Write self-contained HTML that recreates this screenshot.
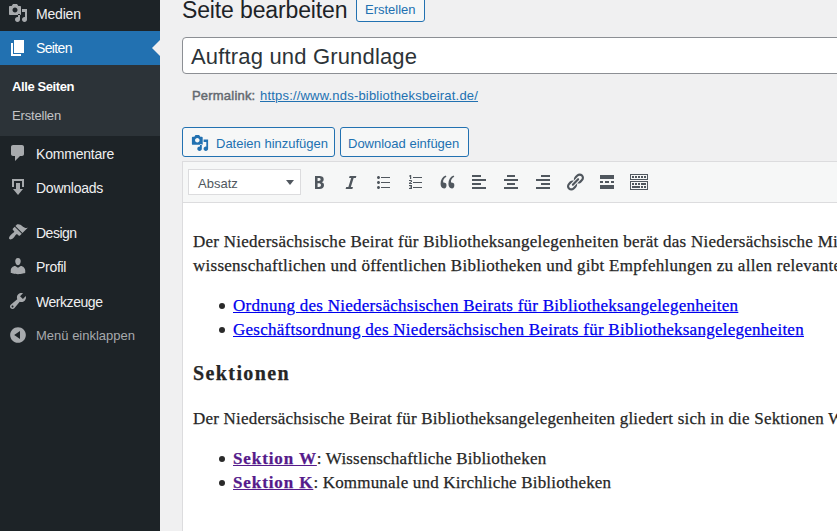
<!DOCTYPE html>
<html><head><meta charset="utf-8">
<style>
*{box-sizing:border-box;margin:0;padding:0}
html,body{width:837px;height:531px;overflow:hidden;background:#f0f0f1;font-family:"Liberation Sans",sans-serif;position:relative}
.a{position:absolute;white-space:nowrap}
#side{position:absolute;left:0;top:0;width:160px;height:531px;background:#1d2327}
.mi{position:absolute;left:0;width:160px;height:34px}
.mt{position:absolute;left:36px;font-size:14px;line-height:18px;color:#f0f0f1}
.ic{position:absolute;left:8px;width:20px;height:20px}
.ic path{fill:#a7aaad}
#sub{position:absolute;left:0;top:65px;width:160px;height:71px;background:#2c3338}
.st{position:absolute;left:12px;font-size:13px;line-height:18px;color:#c3c4c7}
.btn{position:absolute;border:1px solid #2271b1;border-radius:3px;background:#f6f7f7;color:#2271b1;font-size:13px}
.tb{position:absolute;top:172px;width:20px;height:20px}
.tb path,.tb rect,.tb circle{fill:#50575e}
#content{position:absolute;left:182px;top:203px;width:700px;height:400px;background:#fff;border-left:1px solid #dcdcde}
.c{position:absolute;font-family:"Liberation Serif",serif;font-size:17px;line-height:24px;color:#262626;white-space:nowrap;letter-spacing:.26px;-webkit-text-stroke:.25px currentColor}
.bul{position:absolute;width:6px;height:6px;border-radius:50%;background:#2a2a2a}
.lk{color:#0000ee;text-decoration:underline}
.vl{color:#551a8b;text-decoration:underline;font-weight:bold;font-size:17px;letter-spacing:.9px}
</style></head><body>
<div id="side">
  <!-- Medien -->
  <div class="mi" style="top:-3px">
    <svg class="ic" style="top:6px" viewBox="0 0 20 20"><path d="M13 11V4c0-.55-.45-1-1-1h-1.67L9 1H5L3.67 3H2c-.55 0-1 .45-1 1v7c0 .55.45 1 1 1h10c.55 0 1-.45 1-1zM7 4.5c1.38 0 2.5 1.12 2.5 2.5S8.38 9.5 7 9.5 4.5 8.38 4.5 7 5.62 4.5 7 4.5zM14 6h5v10.5c0 1.38-1.120 2.5-2.5 2.5S14 17.88 14 16.5s1.12-2.5 2.5-2.5c.17 0 .34.02.5.05V9h-3V6zM10 13.05V11h2v5.5c0 1.38-1.12 2.5-2.5 2.5S7 17.88 7 16.5s1.12-2.5 2.5-2.5c.17 0 .34.02.5.05z"/></svg>
  </div>
  <div class="mt a" style="top:5px;letter-spacing:-0.2px">Medien</div>
  <!-- Seiten active -->
  <div class="mi" style="top:31px;background:#2271b1"></div>
  <svg class="ic" style="top:38px" viewBox="0 0 20 20"><path style="fill:#fff" d="M6 15V2h10v13H6zm-1 1h8v2H3V5h2v11z"/></svg>
  <div class="mt a" style="top:39px;color:#fff;letter-spacing:-0.65px">Seiten</div>
  <div class="a" style="left:152px;top:40px;width:0;height:0;border-top:8px solid transparent;border-bottom:8px solid transparent;border-right:8px solid #f0f0f1"></div>
  <div id="sub"></div>
  <div class="st a" style="top:78px;color:#fff;font-weight:bold;letter-spacing:-0.4px">Alle Seiten</div>
  <div class="st a" style="top:107px;letter-spacing:-0.18px">Erstellen</div>
  <!-- Kommentare -->
  <svg class="ic" style="top:143px" viewBox="0 0 20 20"><path d="M5 2h9c1.1 0 2 .9 2 2v7c0 1.1-.9 2-2 2h-2l-5 5v-5H5c-1.1 0-2-.9-2-2V4c0-1.1.9-2 2-2z"/></svg>
  <div class="mt a" style="top:145px;letter-spacing:-0.2px">Kommentare</div>
  <!-- Downloads -->
  <svg class="ic" style="top:177px" viewBox="0 0 20 20"><path d="M14.01 4v6h2V2H4v8h2.01V4h8zm-2 2v6h3l-5 6-5-6h3V6h4z"/></svg>
  <div class="mt a" style="top:179px;letter-spacing:-0.25px">Downloads</div>
  <!-- Design -->
  <svg class="ic" style="top:222px" viewBox="0 0 20 20"><path d="M14.48 11.06L7.41 3.99l1.5-1.5c.5-.56 2.3-.47 3.51.32 1.21.8 1.43 1.28 2.91 2.1 1.18.64 2.45 1.26 4.45.85zm-.71.71L6.7 4.7 4.93 6.470c-.39.39-.39 1.02 0 1.41l1.06 1.06c.39.39.39 1.03 0 1.42-.6.6-1.43 1.11-2.21 1.690-.35.26-.7.53-1.01.84C1.43 14.23.4 16.08 1.4 17.07c.99 1 2.84-.03 4.18-1.36.31-.31.58-.66.85-1.02.57-.78 1.08-1.61 1.69-2.21.39-.39 1.02-.39 1.41 0l1.06 1.06c.39.39 1.02.39 1.41 0z"/></svg>
  <div class="mt a" style="top:224px;letter-spacing:-0.5px">Design</div>
  <!-- Profil -->
  <svg class="ic" style="top:256px" viewBox="0 0 20 20"><path d="M10 9.25c-2.27 0-2.73-3.44-2.73-3.44C7 4.02 7.82 2 9.97 2c2.16 0 2.98 2.02 2.710 3.81 0 0-.41 3.44-2.68 3.44zm0 2.57L12.72 10c2.39 0 4.52 2.33 4.52 4.53v2.49s-3.65 1.13-7.24 1.13c-3.65 0-7.24-1.13-7.24-1.13v-2.49c0-2.25 1.94-4.48 4.47-4.48z"/></svg>
  <div class="mt a" style="top:258px;letter-spacing:-0.3px">Profil</div>
  <!-- Werkzeuge -->
  <svg class="ic" style="top:291px" viewBox="0 0 20 20"><path d="M16.68 9.77c-1.34 1.34-3.3 1.67-4.95.99l-5.41 6.52c-.99.99-2.59.99-3.58 0s-.99-2.59 0-3.57l6.52-5.42c-.68-1.65-.35-3.61.99-4.95 1.28-1.28 3.12-1.62 4.72-1.06l-2.89 2.89 2.82 2.82 2.86-2.870c.53 1.58.18 3.39-1.080 4.650zM3.81 16.21c.4.39 1.04.39 1.43 0 .4-.4.4-1.04 0-1.43-.39-.4-1.03-.4-1.430 0-.39.39-.39 1.03 0 1.43z"/></svg>
  <div class="mt a" style="top:293px;letter-spacing:-0.45px">Werkzeuge</div>
  <!-- Collapse -->
  <svg class="ic" style="top:325px" viewBox="0 0 20 20"><path d="M10 2.16c4.33 0 7.84 3.51 7.84 7.84s-3.51 7.84-7.84 7.84S2.16 14.33 2.16 10 5.71 2.16 10 2.16zm2 11.72V6.12L6.18 9.97z"/></svg>
  <div class="a" style="left:36px;top:327px;font-size:13px;line-height:18px;color:#a7aaad">Menü einklappen</div>
</div>

<!-- Main -->
<div class="a" style="left:182px;top:-1px;font-size:23px;line-height:23px;color:#1d2327;letter-spacing:-0.13px">Seite bearbeiten</div>
<div class="btn" style="left:356px;top:-8px;width:69px;height:30px"></div>
<div class="a" style="left:365px;top:3px;font-size:13px;line-height:13px;color:#2271b1">Erstellen</div>

<div class="a" style="left:182px;top:37px;width:700px;height:37px;background:#fff;border:1px solid #8c8f94;border-radius:4px"></div>
<div class="a" style="left:191px;top:46px;font-size:22px;line-height:22px;color:#2c3338;letter-spacing:0.17px">Auftrag und Grundlage</div>

<div class="a" style="left:192px;top:89px;font-size:13px;line-height:13px;color:#646970;-webkit-text-stroke:.45px #646970;letter-spacing:.2px">Permalink:</div>
<div class="a" style="left:260px;top:89px;font-size:13px;line-height:13px;color:#2271b1;text-decoration:underline;letter-spacing:0.19px">https://www.nds-bibliotheksbeirat.de/</div>

<div class="btn" style="left:182px;top:127px;width:153px;height:30px"></div>
<svg class="a" style="left:191px;top:134px;width:18px;height:18px" viewBox="0 0 20 20"><path style="fill:#2271b1" d="M13 11V4c0-.55-.45-1-1-1h-1.67L9 1H5L3.67 3H2c-.55 0-1 .45-1 1v7c0 .55.45 1 1 1h10c.55 0 1-.45 1-1zM7 4.5c1.38 0 2.5 1.12 2.5 2.5S8.38 9.5 7 9.5 4.5 8.38 4.5 7 5.62 4.5 7 4.5zM14 6h5v10.5c0 1.38-1.120 2.5-2.5 2.5S14 17.88 14 16.5s1.12-2.5 2.5-2.5c.17 0 .34.02.5.05V9h-3V6zM10 13.05V11h2v5.5c0 1.38-1.12 2.5-2.5 2.5S7 17.88 7 16.5s1.12-2.5 2.5-2.5c.17 0 .34.02.5.05z"/></svg>
<div class="a" style="left:216px;top:137px;font-size:13px;line-height:13px;color:#2271b1">Dateien hinzufügen</div>
<div class="btn" style="left:340px;top:127px;width:129px;height:30px"></div>
<div class="a" style="left:348px;top:137px;font-size:13px;line-height:13px;color:#2271b1">Download einfügen</div>

<!-- toolbar -->
<div class="a" style="left:182px;top:161px;width:700px;height:42px;background:#f6f7f7;border:1px solid #dcdcde"></div>
<div class="a" style="left:188px;top:169px;width:113px;height:26px;background:#fff;border:1px solid #dcdcde"></div>
<div class="a" style="left:198px;top:177px;font-size:13px;line-height:13px;color:#50575e">Absatz</div>
<div class="a" style="left:286px;top:180px;width:0;height:0;border-left:4px solid transparent;border-right:4px solid transparent;border-top:5px solid #50575e"></div>

<!-- toolbar icons -->
<svg class="tb" style="left:309px" viewBox="0 0 20 20"><path d="M6 4v13h4.54c1.37 0 2.46-.33 3.26-1 .8-.66 1.2-1.58 1.2-2.77 0-.84-.17-1.51-.51-2.01s-.9-.85-1.67-1.03v-.09c.57-.1 1.02-.4 1.36-.9s.51-1.130.51-1.91c0-1.14-.39-1.98-1.17-2.5C12.75 4.26 11.5 4 9.78 4H6zm2.57 5.15V6.02h.75c.81 0 1.39.11 1.75.33.35.22.53.58.53 1.08 0 .54-.19.92-.55 1.14-.36.23-.93.34-1.72.34h-.76zm0 2.12h.89c1.67 0 2.5.59 2.5 1.79 0 .63-.18 1.1-.54 1.39-.36.3-.92.45-1.68.45h-1.17v-3.63z"/></svg>
<svg class="tb" style="left:341px" viewBox="0 0 20 20"><path d="M14.78 6h-2.13l-2.8 9h2.12l-.62 2H4.6l.62-2h2.14l2.8-9H8.03l.62-2h6.75z"/></svg>
<svg class="tb" style="left:373px" viewBox="0 0 20 20"><path d="M5.5 7C4.67 7 4 6.33 4 5.5 4 4.68 4.67 4 5.5 4 6.32 4 7 4.68 7 5.5 7 6.33 6.32 7 5.5 7zM8 5h9v1H8V5zm-2.5 7c-.83 0-1.5-.67-1.5-1.5C4 9.68 4.67 9 5.5 9c.82 0 1.5.68 1.5 1.5 0 .83-.68 1.5-1.5 1.5zM8 10h9v1H8v-1zm-2.5 7c-.83 0-1.5-.67-1.5-1.5 0-.82.67-1.5 1.5-1.5.82 0 1.5.68 1.5 1.5 0 .83-.68 1.5-1.5 1.5zM8 15h9v1H8v-1z"/></svg>
<svg class="tb" style="left:405px" viewBox="0 0 20 20"><path d="M5 3h1.2v4H5z M4 3.6h1v1H4z M8 5h9v1H8z M4 8h2.6v1H4z M6 8.5h1v1.5H6z M5 9.8h1v1H5z M4 10.6h1v1H4z M4 11h3v1H4z M8 10h9v1H8z M4 13h3v1H4z M6 13h1v4H6z M4.8 14.6h1.6v.9H4.8z M4 16h3v1H4z M8 15h9v1H8z"/></svg>
<svg class="tb" style="left:437px" viewBox="0 0 20 20"><path d="M9.49 13.22c0-.74-.2-1.38-.61-1.9-.62-.78-1.83-.94-2.7-.94-.42-1.960.88-4.68 3.28-5.68L8.62 3.5c-3.32 1.28-5.04 4.62-5.04 8.28 0 2.46.99 4.72 3.5 4.72 1.68 0 2.41-1.38 2.41-3.28zm7.84 0c0-.74-.2-1.38-.61-1.9-.63-.78-1.84-.94-2.71-.94-.42-1.96.89-4.68 3.28-5.68L16.46 3.5c-3.32 1.28-5.04 4.62-5.04 8.28 0 2.46.99 4.72 3.5 4.72 1.68 0 2.41-1.38 2.41-3.28z"/></svg>
<svg class="tb" style="left:469px" viewBox="0 0 20 20"><path d="M12 5V3H3v2h9zm5 4V7H3v2h14zm-5 4v-2H3v2h9zm5 4v-2H3v2h14z"/></svg>
<svg class="tb" style="left:501px" viewBox="0 0 20 20"><path d="M14 5V3H6v2h8zm3 4V7H3v2h14zm-3 4v-2H6v2h8zm3 4v-2H3v2h14z"/></svg>
<svg class="tb" style="left:533px" viewBox="0 0 20 20"><path d="M17 5V3H8v2h9zm0 4V7H3v2h14zm0 4v-2H8v2h9zm0 4v-2H3v2h14z"/></svg>
<svg class="tb" style="left:565px" viewBox="0 0 20 20"><path d="M17.74 2.76c1.68 1.69 1.68 4.41 0 6.1l-1.53 1.52c-1.12 1.12-2.7 1.47-4.14 1.09l2.62-2.61.76-.77.76-.76c.84-.84.84-2.2 0-3.04-.84-.85-2.2-.85-3.04 0l-.77.76-3.38 3.38c-.37-1.44-.02-3.02 1.1-4.14l1.52-1.53c1.69-1.68 4.42-1.68 6.1 0zM8.59 13.43l5.34-5.34c.42-.42.42-1.1 0-1.52-.44-.43-1.13-.39-1.53 0l-5.33 5.34c-.42.42-.42 1.1 0 1.52.44.43 1.13.39 1.52 0zm-.76 2.29l4.14-4.15c.38 1.44.03 3.02-1.09 4.14l-1.52 1.53c-1.69 1.68-4.41 1.68-6.1 0-1.68-1.68-1.68-4.42 0-6.1l1.53-1.52c1.12-1.12 2.7-1.47 4.14-1.1l-4.14 4.15c-.85.84-.85 2.2 0 3.05.84.84 2.2.84 3.04 0z"/></svg>
<svg class="tb" style="left:597px" viewBox="0 0 20 20"><path d="M17 7V3H3v4h14zM6 11V9H3v2h3zm6 0V9H8v2h4zm5 0V9h-3v2h3zm0 6v-4H3v4h14z"/></svg>
<svg class="tb" style="left:629px" viewBox="0 0 20 20"><path d="M19 2v6H1V2h18zm-1 5V3H2v4h16zM5 4v2H3V4h2zm3 0v2H6V4h2zm3 0v2H9V4h2zm3 0v2h-2V4h2zm3 0v2h-2V4h2zm2 5v9H1V9h18zm-1 8v-7H2v7h16zM5 11v2H3v-2h2zm3 0v2H6v-2h2zm3 0v2H9v-2h2zm6 0v2h-5v-2h5zm-6 3v2H3v-2h8zm3 0v2h-2v-2h2zm3 0v2h-2v-2h2z"/></svg>
<div id="content"></div>
<div class="c" style="left:193px;top:230px">Der Niedersächsische Beirat für Bibliotheksangelegenheiten berät das Niedersächsische Ministerium</div>
<div class="c" style="left:193px;top:254px">wissenschaftlichen und öffentlichen Bibliotheken und gibt Empfehlungen zu allen relevanten Fragen</div>
<div class="bul" style="left:219px;top:303px"></div>
<div class="c" style="left:233px;top:294px"><span class="lk">Ordnung des Niedersächsischen Beirats für Bibliotheksangelegenheiten</span></div>
<div class="bul" style="left:219px;top:327px"></div>
<div class="c" style="left:233px;top:318px"><span class="lk">Geschäftsordnung des Niedersächsischen Beirats für Bibliotheksangelegenheiten</span></div>
<div class="c" style="left:193px;top:361px;font-size:20px;font-weight:bold;letter-spacing:1.4px">Sektionen</div>
<div class="c" style="left:193px;top:407px;letter-spacing:.2px">Der Niedersächsische Beirat für Bibliotheksangelegenheiten gliedert sich in die Sektionen Wissenschaft</div>
<div class="bul" style="left:219px;top:456px"></div>
<div class="c" style="left:233px;top:447px" ><span class="vl">Sektion W</span><span style="letter-spacing:.18px">: Wissenschaftliche Bibliotheken</span></div>
<div class="bul" style="left:219px;top:480px"></div>
<div class="c" style="left:233px;top:471px" ><span class="vl">Sektion K</span><span style="letter-spacing:.18px">: Kommunale und Kirchliche Bibliotheken</span></div>
</body></html>
